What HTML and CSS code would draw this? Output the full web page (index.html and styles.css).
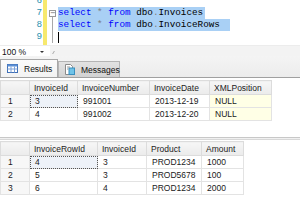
FILE: index.html
```html
<!DOCTYPE html>
<html>
<head>
<meta charset="utf-8">
<link rel="stylesheet" href="styles.css">
</head>
<body>
<div class="app">
  <div class="editor">
    <div class="gutter">
      <div class="lines">
        <div class="ln">6</div>
        <div class="ln">7</div>
        <div class="ln">8</div>
        <div class="ln">9</div>
      </div>
    </div>
    <div class="changebar"></div>
    <div class="outline">
      <div class="obox">−</div>
      <div class="oline"></div>
    </div>
    <div class="code">
      <div class="lines">
        <div class="cl"></div>
        <div class="cl"><span class="sel s7"><span class="kw">select</span> <span class="op">*</span> <span class="kw">from</span> dbo<span class="op">.</span>Invoices</span></div>
        <div class="cl"><span class="sel s8"><span class="kw">select</span> <span class="op">*</span> <span class="kw">from</span> dbo<span class="op">.</span>InvoiceRows</span></div>
        <div class="cl"><span class="caret"></span></div>
      </div>
    </div>
  </div>
  <div class="zoombar">
    <div class="zoom"><span class="zt">100 %</span><span class="arrow"></span></div>
    <div class="hscroll"><span class="grip"></span></div>
  </div>
  <div class="tabs">
    <div class="tab active">
      <svg class="ticon" width="11" height="9" viewBox="0 0 11 9">
        <rect x="0.5" y="0.5" width="10" height="8" fill="#fff" stroke="#3f6fb5"/>
        <rect x="0.5" y="0.5" width="10" height="2" fill="#5b8fd6"/>
        <line x1="0.5" y1="5" x2="10.5" y2="5" stroke="#7aa0d8"/>
        <line x1="4" y1="2.5" x2="4" y2="8.5" stroke="#7aa0d8"/>
        <line x1="7.5" y1="2.5" x2="7.5" y2="8.5" stroke="#7aa0d8"/>
      </svg>
      <span>Results</span>
    </div>
    <div class="tab">
      <svg class="ticon" width="11" height="11" viewBox="0 0 11 11">
        <path d="M1.5 0.5 H6.5 L8.5 2.5 V10.5 H1.5 Z" fill="#fff" stroke="#8a8a8a"/>
        <rect x="5" y="4" width="5.5" height="6.5" fill="#6fc3e8" stroke="#3a8fbf"/>
        <line x1="3" y1="3" x2="6" y2="3" stroke="#9a9a9a"/>
        <line x1="3" y1="5" x2="4.5" y2="5" stroke="#9a9a9a"/>
      </svg>
      <span>Messages</span>
    </div>
  </div>
  <div class="results">
    <table class="grid g1">
      <colgroup><col class="c0"><col class="c29"><col class="c48"><col class="c72"><col class="c60"><col class="c62"></colgroup>
      <tr class="hd"><th class="rn"></th><th>InvoiceId</th><th>InvoiceNumber</th><th>InvoiceDate</th><th>XMLPosition</th></tr>
      <tr><td class="rn">1</td><td class="focus">3</td><td>991001</td><td>2013-12-19</td><td class="null">NULL</td></tr>
      <tr><td class="rn">2</td><td>4</td><td>991002</td><td>2013-12-20</td><td class="null">NULL</td></tr>
    </table>
    <div class="split"></div>
    <table class="grid g2">
      <colgroup><col class="c0"><col class="c68"><col class="c49"><col class="c55"><col class="c42"></colgroup>
      <tr class="hd"><th class="rn"></th><th>InvoiceRowId</th><th>InvoiceId</th><th>Product</th><th>Amount</th></tr>
      <tr><td class="rn">1</td><td class="focus">4</td><td>3</td><td>PROD1234</td><td>1000</td></tr>
      <tr><td class="rn">2</td><td>5</td><td>3</td><td>PROD5678</td><td>100</td></tr>
      <tr><td class="rn">3</td><td>6</td><td>4</td><td>PROD1234</td><td>2000</td></tr>
    </table>
  </div>
</div>
</body>
</html>
```
FILE: styles.css
```css
* { box-sizing: border-box; }
html, body { margin: 0; padding: 0; }
body { width: 300px; height: 207px; overflow: hidden; background: #fff; font-family: "Liberation Sans", Arial, sans-serif; }
.app { display: flex; flex-direction: column; width: 300px; height: 207px; }

.editor { height: 45px; display: flex; background: #fff; overflow: hidden; flex: none; }
.lines { margin-top: -5px; }
.gutter { width: 43px; font-family: "Liberation Mono", monospace; font-size: 9.3px; color: #2b91af; text-align: right; padding-right: 1px; }
.ln, .cl { height: 12px; line-height: 12px; white-space: pre; }
.changebar { width: 4px; background: #f7e96e; }
.outline { width: 11px; }
.obox { margin: 10px 0 0 2px; width: 7px; height: 7px; border: 1px solid #9a9a9a; font-size: 7px; line-height: 5px; text-align: center; color: #555; font-family: "DejaVu Sans", sans-serif; }
.oline { margin-left: 5px; width: 1px; height: 26px; background: #a8a8a8; }
.code { flex: 1; font-family: "Liberation Mono", monospace; font-size: 9.3px; color: #000; }
.sel { display: inline-block; background: #a9d0f5; height: 12px; }
.s7 { width: 147px; }
.s8 { width: 172px; }
.kw { color: #0000ff; }
.op { color: #808080; }
.caret { display: inline-block; width: 1px; height: 11px; background: #000; margin-top: 1px; vertical-align: top; }

.zoombar { height: 11px; display: flex; flex: none; background: #f3f3f3; border-top: 1px solid #ececec; }
.zoom { width: 50px; background: #fff; display: flex; align-items: center; font-size: 8.5px; color: #111; padding-left: 2px; padding-top: 2px; }
.zt { flex: 1; }
.arrow { width: 0; height: 0; border-left: 2px solid transparent; border-right: 2px solid transparent; border-top: 2px solid #333; margin-right: 6px; }
.hscroll { flex: 1; display: flex; align-items: center; padding-left: 3px; padding-top: 2px; }
.grip { width: 2px; height: 3px; border-left: 1px solid #aaa; transform: skewX(-30deg); }

.tabs { height: 22px; flex: none; display: flex; align-items: flex-end; background: linear-gradient(#f4f4f4, #ececec); border-bottom: 1px solid #a0a0a0; }
.tab { display: flex; align-items: center; gap: 6px; font-size: 8.5px; color: #111; height: 16px; padding: 0 3px 0 5px; background: linear-gradient(#e2e2e2, #d2d2d2); border: 1px solid #b4b4b4; border-bottom: none; width: 62px; }
.tab.active { height: 18px; width: 58px; background: linear-gradient(#fbfbfb, #f2f2f2); padding-left: 6px; border-color: #a8a8a8; }
.ticon { flex: none; }

.results { flex: 1; background: #fff; padding-top: 2px; }
.grid { border-collapse: collapse; table-layout: fixed; font-size: 8.5px; color: #1a1a1a; }
.g1 { width: 271px; }
.g2 { width: 243px; }
.c0 { width: 29px; }
.c29 { width: 48px; }
.c48 { width: 72px; }
.c72 { width: 60px; }
.c60 { width: 62px; }
.c68 { width: 68px; }
.c49 { width: 49px; }
.c55 { width: 55px; }
.c42 { width: 42px; }
.grid th, .grid td { height: 13px; padding: 0 0 0 5px; text-align: left; font-weight: normal; white-space: nowrap; overflow: hidden; border: 1px solid #e3e3e3; }
.grid th { background: linear-gradient(#f6f6f6, #ebebeb); border-color: #dcdcdc; color: #222; padding-left: 4px; height: 14px; }
.grid td.rn { background: #f7f7f7; padding-left: 7px; }
.grid td.null { background: #ffffe6; }
.grid td.focus { background: #eef2f8; outline: 1px dotted #555; outline-offset: -1px; }
.split { height: 3px; margin: 16px 0 1px; border-top: 1px solid #c8c8c8; border-bottom: 1px solid #d8d8d8; background: #f0f0f0; }
```
